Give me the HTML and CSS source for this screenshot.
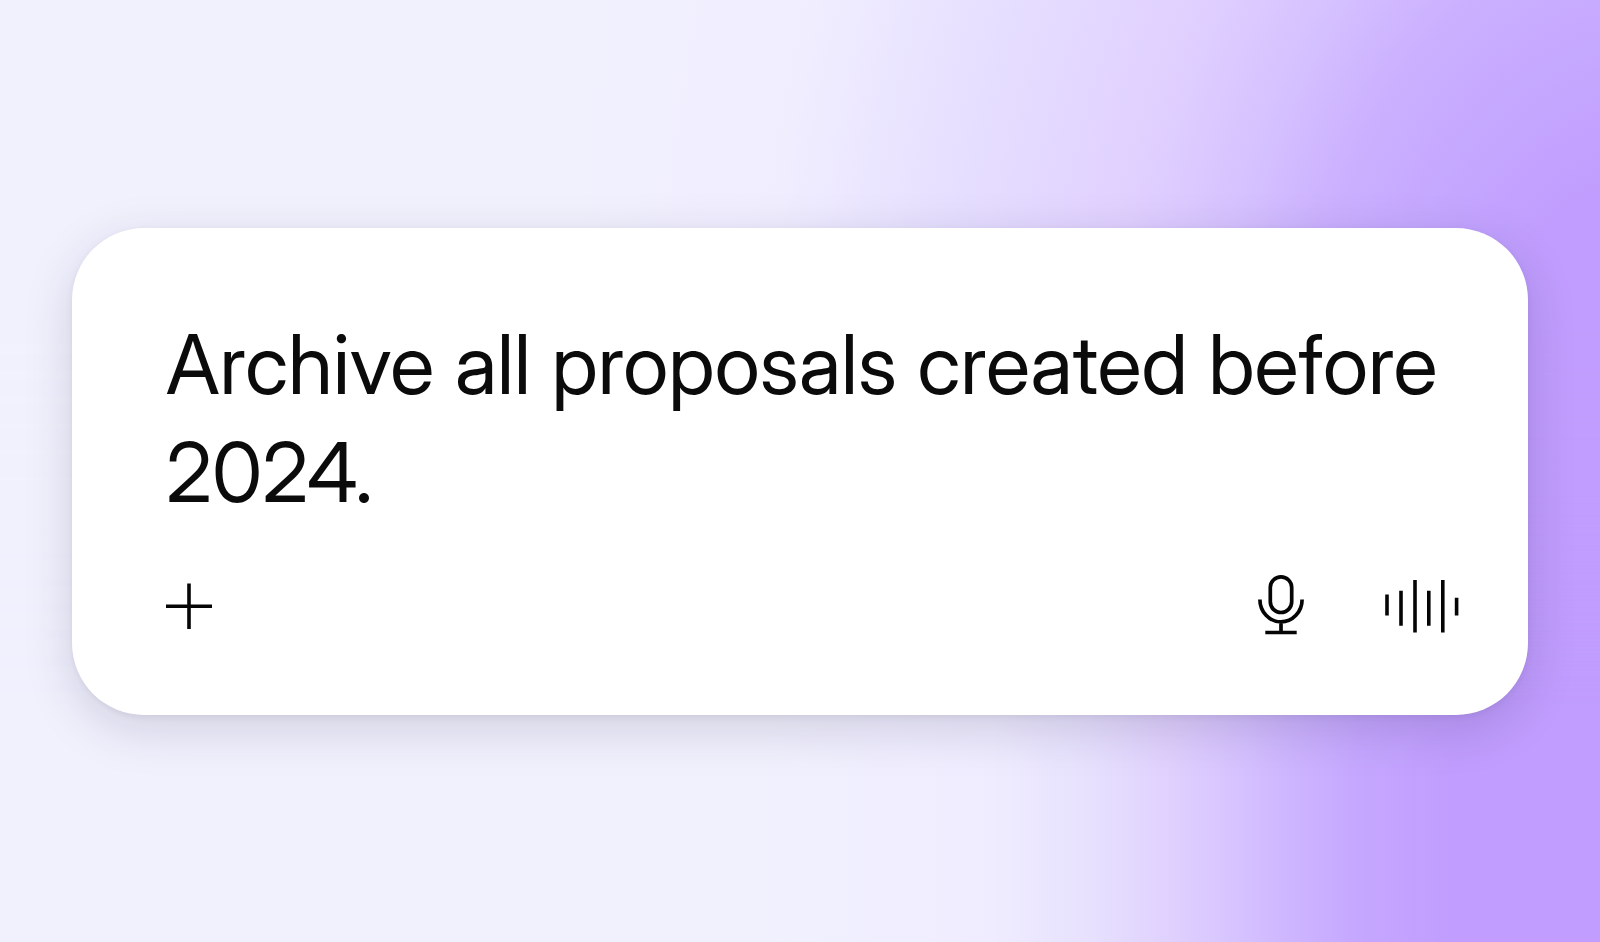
FILE: index.html
```html
<!DOCTYPE html>
<html lang="en">
<head>
  <meta charset="utf-8">
  <meta name="viewport" content="width=device-width, initial-scale=1">
  <title>Prompt</title>
  <link rel="stylesheet" href="styles.css">
</head>
<body>
  <main class="stage">
    <form class="composer">
      <textarea class="composer-input" rows="2" aria-label="Message" spellcheck="false">Archive all proposals created before 2024.</textarea>
      <div class="toolbar">
        <button class="tool" type="button" aria-label="Add">
          <svg width="46" height="62" viewBox="0 0 46 62" fill="none" stroke="currentColor" stroke-width="3.600"><path d="M23 8.500v45.500M0 31.200h46"/></svg>
        </button>
        <div class="tools">
          <button class="tool" type="button" aria-label="Dictate">
            <svg width="46" height="62" viewBox="0 0 46 62" fill="none" stroke="currentColor" stroke-width="3.700"><rect x="12.300" y="1.900" width="21.400" height="35.600" rx="10.700"/><path d="M1.900 24.500a21.100 22.400 0 0 0 42.200 0M23 47v10.500M7.300 57.500h31.400"/></svg>
          </button>
          <button class="tool" type="button" aria-label="Voice mode">
            <svg width="74" height="62" viewBox="0 0 74 62" fill="none" stroke="currentColor" stroke-width="3.600"><path d="M2 19.500v21M16 15.700v35M30 5v52.600M43.800 15.700v35M57.800 5v52.600M71.600 22.700v17.800"/></svg>
          </button>
        </div>
      </div>
    </form>
  </main>
</body>
</html>
```
FILE: styles.css
```css
* {
  box-sizing: border-box;
}

body {
  margin: 0;
  font-family: "Inter Display", Inter, "Liberation Sans", sans-serif;
  color: #0b0b0b;
}

.stage {
  position: relative;
  isolation: isolate;
  display: flex;
  align-items: center;
  justify-content: center;
  min-height: 100vh;
  padding: 72px;
  overflow: hidden;
  background: linear-gradient(90deg, #f1f1fe 48%, #efecff 62%, #e7e1fe 68%, #e0d1fe 73%, #d7c4ff 77%, #cdb4ff 81%, #c5a7ff 85%, #c09dfe 91%);
}

.stage::before {
  content: "";
  position: absolute;
  inset: 0;
  z-index: -1;
  background: radial-gradient(69% 175% at 103% 48%, #c09dfe 16%, #c5a8ff 25%, #cbb0ff 32%, #d6c2ff 40%, #e0d0ff 49%, #e6dfff 65%, #f0edff 80%, #f1f1fe 98%);
  mask-image: linear-gradient(#000 35%, transparent 75%);
}

.composer {
  display: flex;
  flex-direction: column;
  gap: 48px;
  width: 100%;
  padding: 83px 69px 78px 94px;
  border-radius: 72px;
  background: #fff;
  box-shadow: 0 14px 50px rgba(20, 15, 50, 0.15), 0 2px 6px rgba(20, 15, 50, 0.06);
}

.composer-input {
  display: block;
  width: 100%;
  padding: 0;
  border: 0;
  outline: 0;
  resize: none;
  overflow: hidden;
  background: transparent;
  color: inherit;
  font: 400 82px/108px "Inter Display", Inter, "Liberation Sans", sans-serif;
}

.toolbar,
.tools {
  display: flex;
  align-items: center;
}

.toolbar {
  justify-content: space-between;
}

.tools {
  gap: 81px;
}

.tool {
  display: flex;
  padding: 0;
  border: 0;
  background: none;
  color: #050505;
}
```
